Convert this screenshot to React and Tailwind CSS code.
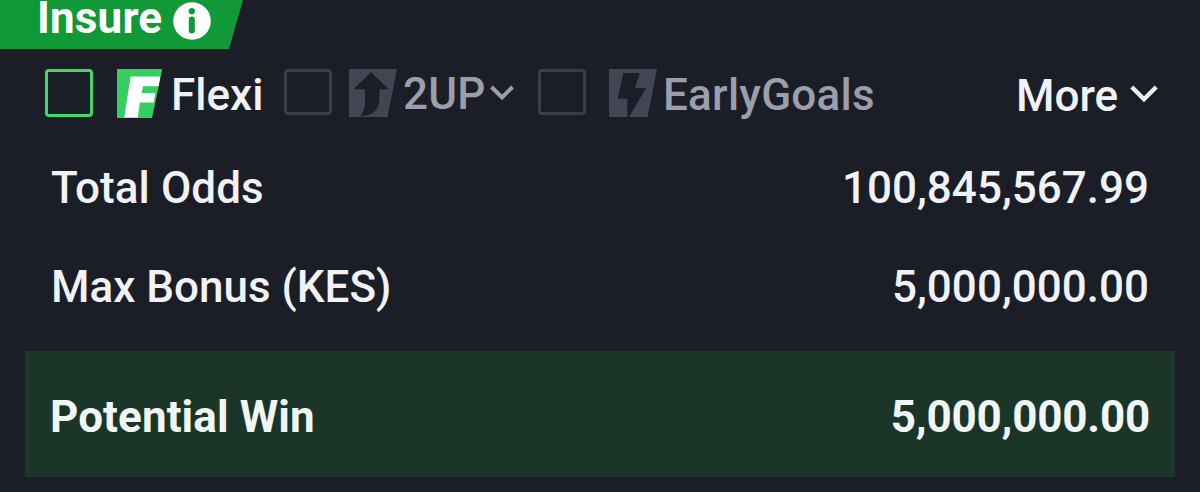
function InfoIcon() {
  return (
    <svg className="ml-[9px] mt-[1px] h-[40px] w-[40px] shrink-0" viewBox="0 0 40 40">
      <circle cx="20" cy="20" r="18.8" fill="#fff" />
      <circle cx="19.8" cy="10.2" r="3.1" fill="#109936" />
      <rect x="16.8" y="15.6" width="6" height="16.8" rx="3" fill="#109936" />
    </svg>
  );
}

function FlexiIcon() {
  return (
    <svg className="h-[49px] w-[46px] shrink-0" viewBox="0 0 46 49">
      <path d="M0 0H45.3L35 49H0Z" fill="#36cd62" />
      <path d="M13.6 7.4H43.2L41.7 17.2H26L24.7 24H38.3L36.6 33.6H22.8L20.8 48.4H7.2Z" fill="#fff" />
    </svg>
  );
}

function TwoUpIcon() {
  return (
    <svg className="h-[48px] w-[48px] shrink-0" viewBox="0 0 48 48">
      <path d="M0 0H48L38.6 48H0Z" fill="#424553" />
      <path d="M22 3.3L39.8 20.2H30.3V30Q30.3 46.3 11.2 47.3Q16 42 16 34V20.2H4.5Z" fill="#1b1e26" />
    </svg>
  );
}

function BoltIcon() {
  return (
    <svg className="h-[48px] w-[48px] shrink-0" viewBox="0 0 48 48">
      <path d="M0 0H48L38.6 48H0Z" fill="#424553" />
      <path d="M14.4 4H30.8L26 19.2H37L20 48H18.4V29.7H8.6Z" fill="#1b1e26" />
    </svg>
  );
}

function Checkbox({ className }) {
  return <span className={`shrink-0 rounded-[4px] border-[3px] ${className}`} />;
}

function SummaryRow({ label, value, className, labelClassName = "", valueClassName = "" }) {
  return (
    <div className={`flex justify-between whitespace-nowrap leading-[52px] ${className}`}>
      <span className={labelClassName}>{label}</span>
      <span className={valueClassName}>{value}</span>
    </div>
  );
}

export default function App() {
  return (
    <main className="flex h-[492px] w-[1200px] flex-col overflow-hidden bg-[#1b1e26] font-['Roboto',sans-serif] text-[44px] font-medium text-[#f0f2f7]">
      <header className="flex h-[49px] w-[243px] shrink-0 items-start bg-[#109936] pl-[37px] text-white [clip-path:polygon(0_0,100%_0,229px_100%,0_100%)]">
        <span className="w-[126px] whitespace-nowrap font-bold leading-[36px] tracking-[0.15px]">Insure</span>
        <InfoIcon />
      </header>

      <section className="flex h-[69px] shrink-0 items-start whitespace-nowrap pl-[45px] pt-[20px] leading-[52px]">
        <Checkbox className="h-[48px] w-[48px] border-[#3ddb6c]" />
        <div className="ml-[24px] flex w-[167px]">
          <FlexiIcon />
          <span className="ml-[8px]">Flexi</span>
        </div>
        <Checkbox className="h-[46px] w-[48px] border-[#3b3e4b]" />
        <div className="ml-[17px] flex w-[189px] text-[#9b9fab]">
          <TwoUpIcon />
          <span className="-mt-[1px] ml-[6px] w-[84px] tracking-[0.2px]">2UP</span>
          <svg className="ml-[3px] mt-[16px] h-[16px] w-[24px] shrink-0" viewBox="0 0 24 16" fill="none">
            <path d="M1.5 2L12 12.5L22.5 2" stroke="currentColor" strokeWidth="4" />
          </svg>
        </div>
        <Checkbox className="h-[46px] w-[48px] border-[#3b3e4b]" />
        <div className="ml-[23px] flex w-[407px] text-[#9b9fab]">
          <BoltIcon />
          <span className="ml-[6px] tracking-[0.25px]">EarlyGoals</span>
        </div>
        <div className="flex">
          <span className="mt-[1px] w-[104px]">More</span>
          <svg className="ml-[10px] mt-[15px] h-[20px] w-[28px] shrink-0" viewBox="0 0 28 20" fill="none">
            <path d="M1.8 3L14 15.2L26.2 3" stroke="currentColor" strokeWidth="4.4" />
          </svg>
        </div>
      </section>

      <SummaryRow
        label="Total Odds"
        value="100,845,567.99"
        className="mt-[44px] pl-[51px] pr-[51px]"
        labelClassName="tracking-[0.1px]"
      />
      <SummaryRow label="Max Bonus (KES)" value="5,000,000.00" className="mt-[47px] pl-[51px] pr-[51px]" />
      <section className="mx-[25px] mt-[38px] h-[126px] shrink-0 bg-[#1c3529] pt-[40px] text-[#f0f5f5]">
        <SummaryRow
          label="Potential Win"
          value="5,000,000.00"
          className="px-[25px] font-bold"
          labelClassName="tracking-[0.08px]"
          valueClassName="tracking-[-0.2px]"
        />
      </section>
    </main>
  );
}
